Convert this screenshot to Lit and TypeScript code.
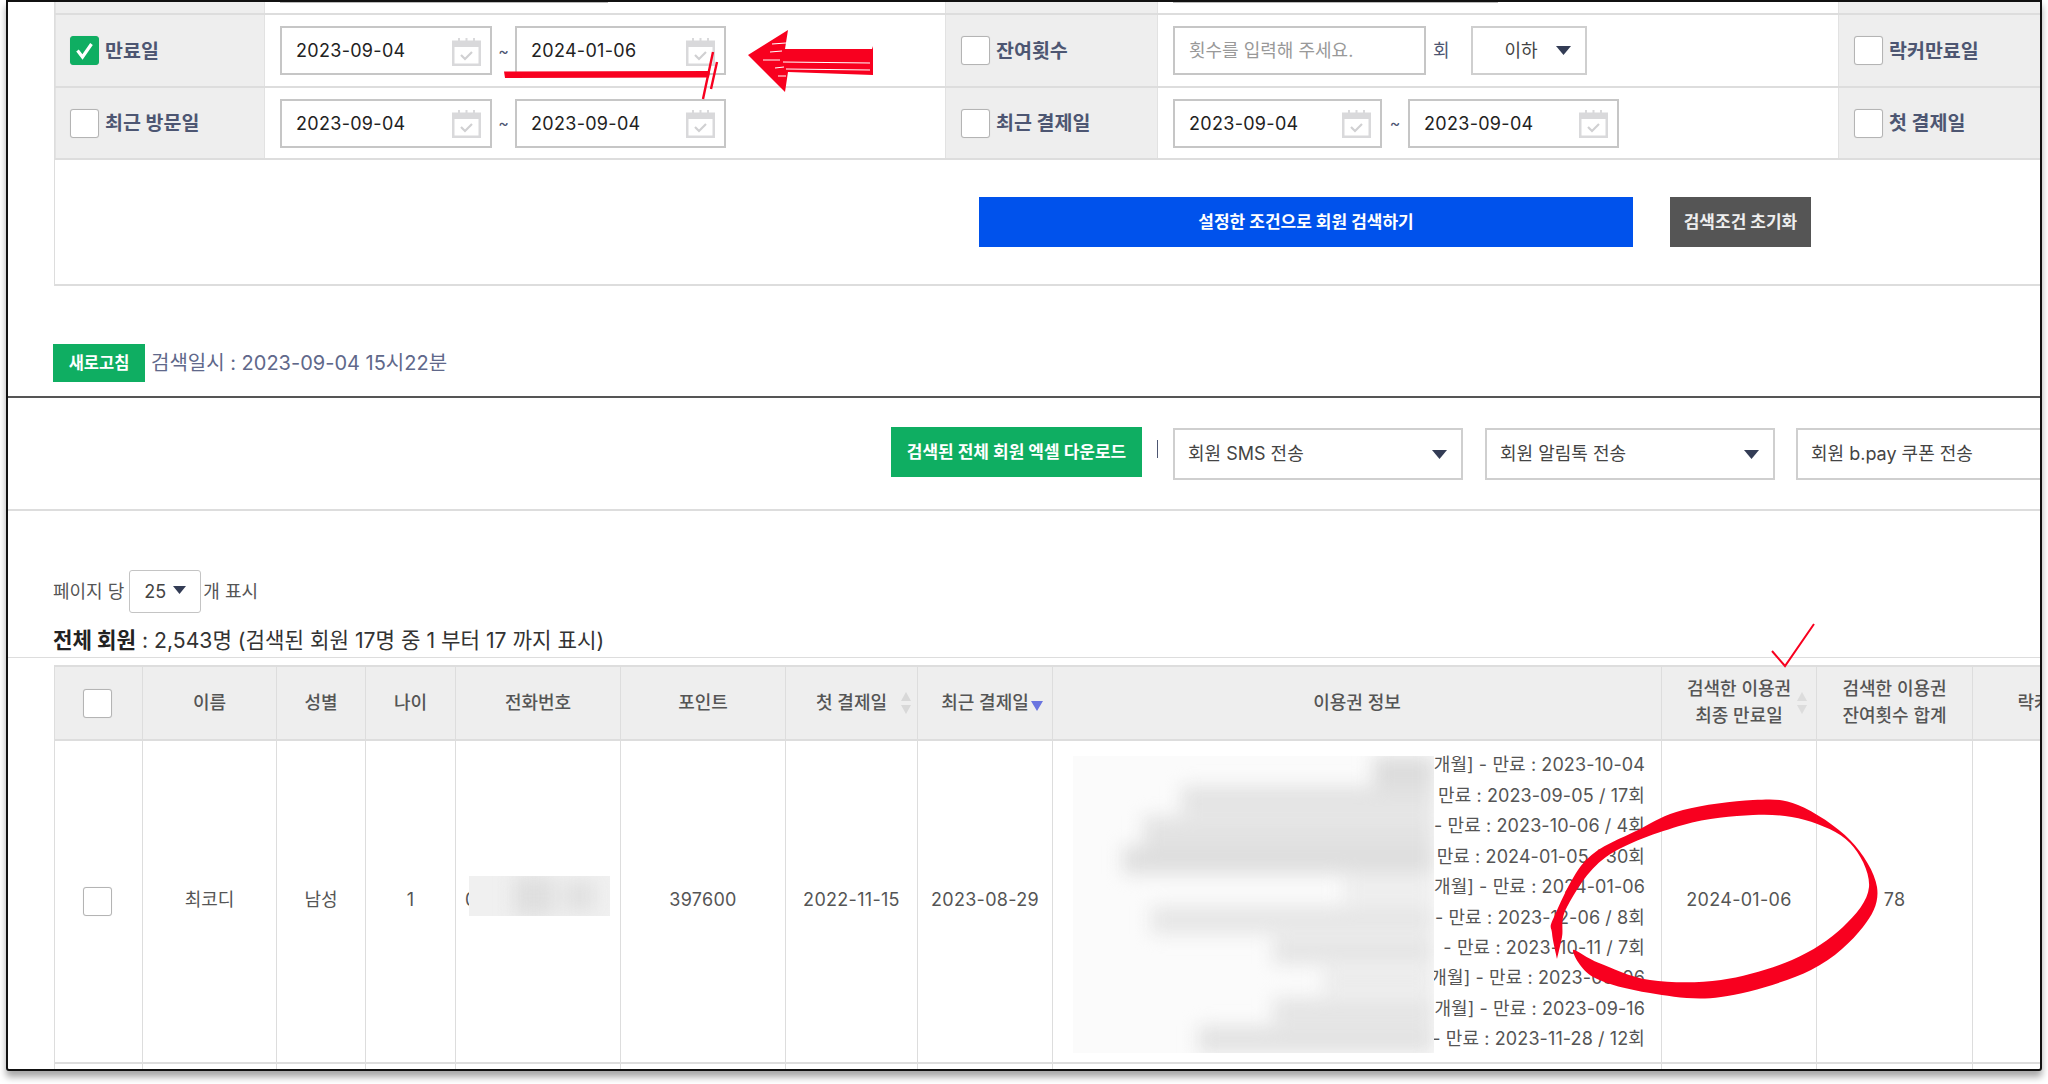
import { LitElement, html, css, svg } from "lit";
import { customElement } from "lit/decorators.js";

const smooth = (p: number[][]) => {
  let d = `M${p[0][0]},${p[0][1]}`;
  for (let i = 0; i < p.length - 1; i++) {
    const a = p[Math.max(i - 1, 0)], b = p[i], c = p[i + 1], e = p[Math.min(i + 2, p.length - 1)];
    d += ` C${b[0] + (c[0] - a[0]) / 6},${b[1] + (c[1] - a[1]) / 6} ${c[0] - (e[0] - b[0]) / 6},${c[1] - (e[1] - b[1]) / 6} ${c[0]},${c[1]}`;
  }
  return d + " Z";
};

const circle = smooth([
  [1557, 959], [1552, 933], [1554, 917], [1586, 860], [1638, 830], [1683, 810], [1753, 800], [1798, 805], [1850, 840], [1877, 887],
  [1863, 927], [1811, 970], [1721, 997], [1650, 993], [1593, 977], [1573, 950],
  [1599, 963], [1650, 980], [1721, 980], [1792, 960], [1843, 927], [1869, 887], [1850, 843], [1805, 820],
  [1753, 815], [1683, 825], [1606, 857], [1567, 907], [1562, 937], [1557, 959],
]);

const calendar = html`<svg class="cal" viewBox="0 0 29 29" width="29" height="29">
  <path d="M1 5h27v23H1z" fill="#fff" stroke="#d9d9db" stroke-width="3" />
  <path d="M0 4h29v6H0z" fill="#d9d9db" />
  <path d="M7 1v5M14.5 1v5M22 1v5" stroke="#d9d9db" stroke-width="2" />
  <path d="M9 18l4 4 7-7" fill="none" stroke="#d0d0d2" stroke-width="2.2" />
</svg>`;

const box = (on = false) => html`<span class="box ${on ? "on" : ""}">${on
  ? html`<svg viewBox="0 0 29 29" width="29" height="29"><path d="M7.5 14.5l5 6.5 9-13" fill="none" stroke="#fff" stroke-width="3.2" /></svg>`
  : ""}</span>`;

const date = (v: string, w: number) => html`<div class="field" style="width:${w}px"><span class="num">${v}</span>${calendar}</div>`;

const label = (t: string, on = false, first = false) =>
  html`<div class="lab ${first ? "first" : ""}">${box(on)}<span>${t}</span></div>`;

const tri = html`<svg class="tri" viewBox="0 0 15 9" width="15" height="9"><path d="M0 0h15L7.5 9z" /></svg>`;

const widths = [89, 134, 89, 90, 165, 165, 132, 135, 609, 155, 156, 156];

const tickets = [
  "개월] - 만료 : 2023-10-04",
  "만료 : 2023-09-05 / 17회",
  "- 만료 : 2023-10-06 / 4회",
  "만료 : 2024-01-05 / 30회",
  "개월] - 만료 : 2024-01-06",
  "- 만료 : 2023-12-06 / 8회",
  "- 만료 : 2023-10-11 / 7회",
  "개월] - 만료 : 2023-09-06",
  "개월] - 만료 : 2023-09-16",
  "- 만료 : 2023-11-28 / 12회",
];

const blobs = [
  [300, 0, 61, 40, "#dcdcdc"],
  [108, 30, 253, 28, "#e3e3e3"],
  [70, 60, 291, 30, "#e3e3e3"],
  [50, 90, 311, 28, "#dedede"],
  [270, 120, 91, 28, "#eeeeee"],
  [78, 150, 283, 28, "#e6e6e6"],
  [200, 182, 161, 26, "#e4e4e4"],
  [250, 212, 111, 26, "#ebebeb"],
  [200, 242, 161, 26, "#e4e4e4"],
  [125, 270, 236, 30, "#e2e2e2"],
];

@customElement("app-root")
export class AppRoot extends LitElement {
  static styles = css`
    :host { display: block; position: relative; width: 2048px; height: 1084px; background: #fff; overflow: hidden;
      font-family: Inter, "Noto Sans CJK KR", sans-serif; font-size: 18px; color: #555; }
    * { box-sizing: border-box; }
    .num { letter-spacing: .3px; }
    .frame { position: relative; margin-left: 6px; width: 2036px; height: 1071px; border: 2px solid #111; border-radius: 0 0 3px 3px;
      overflow: hidden; background: #fff; box-shadow: 0 6px 7px rgba(0, 0, 0, .35); }
    .search { margin-left: 46px; width: 2100px; border-left: 1px solid #ddd; }
    .row { display: grid; grid-template-columns: 210px 680px 213px 680px 300px; height: 73px; border-bottom: 2px solid #ddd; }
    .row.cut { height: 13px; }
    .row.second { height: 72px; }
    .lc { background: #eee; border-left: 1px solid #e2e2e2; border-right: 1px solid #e2e2e2; }
    .lab { display: flex; align-items: center; gap: 6px; height: 100%; padding-left: 15px; font-size: 19.5px; font-weight: 700; color: #4d5672; }
    .lab.first { padding-left: 14px; }
    .lab span:last-child { margin-top: -3px; }
    .vc { display: flex; align-items: center; padding-left: 15px; }
    .sliver { height: 1px; background: #bbb; }
    .vc.top { align-items: flex-start; }
    .box { display: inline-block; flex: none; width: 29px; height: 29px; background: #fff; border: 1px solid #b4b4b4; border-radius: 3px;
      box-shadow: 0 0 1px rgba(0, 0, 0, .15); position: relative; }
    .box.on { background: #0fae62; border-color: #0fae62; }
    .box svg { display: block; margin: -1px; }
    .field { display: flex; align-items: center; justify-content: space-between; height: 49px; padding: 0 9px 0 14px; border: 2px solid #c6c6c6;
      background: #fff; color: #222; flex: none; }
    .field .cal { margin-top: 1px; }
    .tilde { flex: none; width: 23px; text-align: center; color: #4d5672; font-size: 16px; }
    .tilde.w { width: 26px; }
    .ph { color: #999; font-size: 18px; justify-content: flex-start; padding-bottom: 3px; }
    .unit { margin: -3px 21px 0 7px; color: #4d5672; font-size: 18px; }
    .sel { display: flex; align-items: center; justify-content: space-between; flex: none; border: 2px solid #cfcfcf; background: #fff; color: #444; font-size: 18px; }
    .tri { display: block; fill: #333c55; flex: none; }
    .sel.small { width: 116px; height: 49px; padding: 0 14px 0 32px; color: #444; }
    .sel span { margin-top: -3px; }
    .actions { display: flex; align-items: flex-start; gap: 37px; height: 126px; padding: 37px 0 0 924px; border-bottom: 2px solid #ddd; }
    .btn { display: flex; align-items: center; justify-content: center; flex: none; height: 50px; padding-bottom: 3px; color: #fff; font-size: 17px; font-weight: 700; }
    .blue { width: 654px; background: #0052ec; }
    .grey { width: 141px; background: #555; color: #eee; }
    .refresh { display: flex; align-items: center; gap: 6px; margin: 58px 0 0 45px; height: 38px; color: #60688a; font-size: 20px; }
    .refresh > span { margin-top: -3px; }
    .refresh .btn { width: 92px; height: 38px; background: #0fae62; font-size: 16.5px; }
    .dark { height: 2px; background: #555; margin-top: 14px; }
    .tools { display: flex; align-items: flex-start; width: 2200px; height: 113px; padding: 29px 0 0 883px; border-bottom: 2px solid #ddd; }
    .green { width: 251px; background: #0fae62; }
    .bar { flex: none; width: 1px; height: 18px; margin: 13px 15px 0 15px; background: #4d5672; }
    .sel.wide { width: 290px; height: 52px; margin-top: 1px; padding: 0 14px 0 13px; margin-right: 22px; }
    .sel.wide span { margin-top: -5px; }
    .sel.wide.n { margin-right: 21px; }
    .per { display: flex; align-items: center; gap: 5px; margin: 59px 0 0 45px; height: 43px; color: #555; }
    .per > span { margin-top: -3px; }
    .sel.mini { width: 72px; height: 43px; margin-right: -3px; padding: 0 14px 0 14px; border: 1px solid #c4c4c4; border-radius: 3px; color: #444; }
    .mini .tri { width: 13px; height: 8px; margin-top: -4px; }
    .mini span { margin-top: 0; }
    .total { margin: 12px 0 0 45px; height: 30px; line-height: 30px; font-size: 21.2px; color: #333; }
    .total b { color: #222; }
    .thin { height: 1px; background: #ddd; margin-top: 2px; }
    table { margin: 7px 0 0 46px; border-collapse: separate; border-spacing: 0; table-layout: fixed; width: 2075px; }
    th, td { border-right: 1px solid #ddd; text-align: center; padding: 0; }
    tr > :first-child { border-left: 1px solid #ddd; }
    th { height: 76px; background: #eee; border-top: 2px solid #ddd; border-bottom: 2px solid #ddd; color: #555; font-weight: 500;
      font-size: 18px; line-height: 27px; position: relative; white-space: nowrap; padding-bottom: 2px; }
    td { height: 321px; color: #555; position: relative; padding-bottom: 4px; letter-spacing: .3px; }
    td.kr { padding-bottom: 8px; letter-spacing: 0; }
    .rest td { height: 10px; padding: 0; border-top: 2px solid #ddd; }
    .cb { display: flex; justify-content: center; padding-right: 3px; margin-top: 3px; }
    td .cb { margin-top: 4px; }
    .sort { position: absolute; display: block; }
    .sort.a { right: 5px; top: 25px; }
    .sort.b { right: 9px; top: 34px; }
    .sort.c { right: 8px; top: 25px; }
    .phone { text-align: left; padding-left: 9px; }
    .veil { position: absolute; overflow: hidden; background: #fbfbfb; }
    .veil.p { left: 13px; top: 135px; width: 141px; height: 40px; background: #f0f0f0; }
    .veil.t { left: 20px; top: 15px; width: 361px; height: 297px; }
    .veil svg { display: block; filter: blur(9px); }
    .veil.p svg { filter: blur(9px); }
    td.tick { text-align: right; padding: 2px 16px 0 0; line-height: 30.4px; white-space: nowrap; overflow: hidden; letter-spacing: .1px; }
    .ink { position: absolute; left: 0; top: 0; pointer-events: none; }
  `;

  render() {
    return html`
      <div class="frame">
        <section class="search">
          <div class="row cut">
            <div class="lc"></div><div class="vc top"><div class="sliver" style="width:328px"></div></div>
            <div class="lc"></div><div class="vc top"><div class="sliver" style="width:325px"></div></div>
            <div class="lc"></div>
          </div>
          <div class="row">
            <div class="lc">${label("만료일", true, true)}</div>
            <div class="vc">${date("2023-09-04", 212)}<span class="tilde">~</span>${date("2024-01-06", 211)}</div>
            <div class="lc">${label("잔여횟수")}</div>
            <div class="vc">
              <div class="field ph" style="width:253px">횟수를 입력해 주세요.</div>
              <span class="unit">회</span>
              <div class="sel small"><span>이하</span> ${tri}</div>
            </div>
            <div class="lc">${label("락커만료일")}</div>
          </div>
          <div class="row second">
            <div class="lc">${label("최근 방문일", false, true)}</div>
            <div class="vc">${date("2023-09-04", 212)}<span class="tilde">~</span>${date("2023-09-04", 211)}</div>
            <div class="lc">${label("최근 결제일")}</div>
            <div class="vc">${date("2023-09-04", 209)}<span class="tilde w">~</span>${date("2023-09-04", 211)}</div>
            <div class="lc">${label("첫 결제일")}</div>
          </div>
          <div class="actions">
            <div class="btn blue">설정한 조건으로 회원 검색하기</div>
            <div class="btn grey">검색조건 초기화</div>
          </div>
        </section>

        <div class="refresh"><div class="btn">새로고침</div><span>검색일시 : 2023-09-04 15시22분</span></div>
        <div class="dark"></div>

        <div class="tools">
          <div class="btn green">검색된 전체 회원 엑셀 다운로드</div>
          <span class="bar"></span>
          <div class="sel wide"><span>회원 SMS 전송</span> ${tri}</div>
          <div class="sel wide n"><span>회원 알림톡 전송</span> ${tri}</div>
          <div class="sel wide"><span>회원 b.pay 쿠폰 전송</span> ${tri}</div>
        </div>

        <div class="per"><span>페이지 당</span> <div class="sel mini"><span>25</span> ${tri}</div> <span>개 표시</span></div>
        <div class="total"><b>전체 회원</b> : 2,543명 (검색된 회원 17명 중 1 부터 17 까지 표시)</div>
        <div class="thin"></div>

        <table>
          <colgroup>${widths.map((w) => html`<col style="width:${w}px" />`)}</colgroup>
          <thead>
            <tr>
              <th><div class="cb">${box()}</div></th>
              <th>이름</th><th>성별</th><th>나이</th><th>전화번호</th><th>포인트</th>
              <th>첫 결제일
                <svg class="sort a" width="12" height="22" viewBox="0 0 12 22" fill="#d8d8d8"><path d="M6 0l5 9H1zM6 22l-5-9h10z" /></svg>
              </th>
              <th>최근 결제일
                <svg class="sort b" width="12" height="10" viewBox="0 0 12 10" fill="#6a75e0"><path d="M0 0h12L6 10z" /></svg>
              </th>
              <th>이용권 정보</th>
              <th>검색한 이용권<br />최종 만료일
                <svg class="sort c" width="12" height="22" viewBox="0 0 12 22" fill="#dcdcdc"><path d="M6 0l5 9H1zM6 22l-5-9h10z" /></svg>
              </th>
              <th>검색한 이용권<br />잔여횟수 합계</th>
              <th>락커만료</th>
            </tr>
          </thead>
          <tbody>
            <tr>
              <td><div class="cb">${box()}</div></td>
              <td class="kr">최코디</td><td class="kr">남성</td><td>1</td>
              <td class="phone">0
                <div class="veil p"><svg width="141" height="40">
                  <rect x="45" y="-5" width="40" height="50" fill="#dedede" />
                  <rect x="95" y="5" width="30" height="30" fill="#e0e0e0" />
                </svg></div>
              </td>
              <td>397600</td><td>2022-11-15</td><td>2023-08-29</td>
              <td class="tick">
                ${tickets.map((t) => html`<div>${t}</div>`)}
                <div class="veil t"><svg width="361" height="297">
                  ${blobs.map((b) => svg`<rect x=${b[0]} y=${b[1]} width=${b[2]} height=${b[3]} fill=${b[4]} />`)}
                </svg></div>
              </td>
              <td>2024-01-06</td><td>78</td><td></td>
            </tr>
            <tr class="rest">${widths.map(() => html`<td></td>`)}</tr>
          </tbody>
        </table>
      </div>

      <svg class="ink" width="2048" height="1084" viewBox="0 0 2048 1084" fill="#f8001f">
        <path d="M748 55L788 30L785 49L872 49L873 46L873 75L788 72L785 92Z" />
        <path d="M783 62L870 63M786 69L870 70M772 44L786 43M770 52L782 51M763 60L780 60M775 68L784 67M778 76L786 76" stroke="#fff" stroke-width="1.2" fill="none" />
        <path d="M504 71.5L710 71L709 77.5L505 78Z" />
        <path d="M703 99L713 52M711 89L717 62" stroke="#f8001f" stroke-width="2.4" fill="none" />
        <path d="M1772 651L1785 666L1814 624" stroke="#f8001f" stroke-width="2" fill="none" />
        <path d=${circle} />
      </svg>
    `;
  }
}
